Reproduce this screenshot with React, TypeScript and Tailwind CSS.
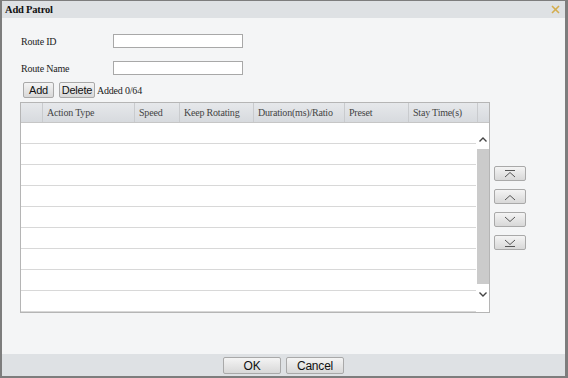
import React from "react";

const cols = [
  { w: "w-[22px]", label: "" },
  { w: "w-[92px]", label: "Action Type" },
  { w: "w-[45px]", label: "Speed" },
  { w: "w-[74px]", label: "Keep Rotating" },
  { w: "w-[91px]", label: "Duration(ms)/Ratio" },
  { w: "w-[64px]", label: "Preset" },
  { w: "w-[69px]", label: "Stay Time(s)" },
];

function Btn({ children, className = "" }: { children: React.ReactNode; className?: string }) {
  return (
    <div
      className={
        "flex items-center justify-center border border-[#a9a9a9] rounded-[2px] bg-gradient-to-b from-[#f4f4f4] to-[#d8d8d8] text-[11px] text-[#111] font-['Liberation_Sans',Arial,sans-serif] " +
        className
      }
    >
      {children}
    </div>
  );
}

function MoveIcon({ kind }: { kind: "top" | "up" | "down" | "bottom" }) {
  return (
    <svg width="12" height="8" viewBox="0 0 12 8" fill="none" stroke="#555" strokeWidth="1">
      {kind === "top" && <line x1="1" y1="0.5" x2="11" y2="0.5" />}
      {(kind === "top" || kind === "up") && <polyline points="1,7 6,2.5 11,7" />}
      {(kind === "down" || kind === "bottom") && <polyline points="1,1 6,5.5 11,1" />}
      {kind === "bottom" && <line x1="1" y1="7.5" x2="11" y2="7.5" />}
    </svg>
  );
}

export default function App() {
  return (
    <div className="w-[568px] h-[378px] bg-[#f4f5f6] border-[#7d7d7d] border-l-2 border-t border-r-[3px] border-b-2 flex flex-col font-['Liberation_Serif',serif] text-[10px] tracking-[-0.2px] text-[#222]">
      {/* title bar */}
      <div className="h-[17px] bg-[#dee1e4] flex items-center justify-between pl-[3px] pr-[5px]">
        <span className="font-bold text-[10.5px] tracking-[-0.2px] text-[#111]">Add Patrol</span>
        <svg width="9" height="9" viewBox="0 0 9 9" stroke="#d4ad4e" strokeWidth="1.6">
          <line x1="1" y1="1" x2="8" y2="8" />
          <line x1="8" y1="1" x2="1" y2="8" />
        </svg>
      </div>

      {/* body */}
      <div className="flex-1 pl-[18px] pt-[16px]">
        <div className="flex items-center h-[14px]">
          <span className="w-[93px] pl-[1px]">Route ID</span>
          <div className="w-[130px] h-[14px] bg-white border border-[#a8a8a8]" />
        </div>
        <div className="flex items-center h-[14px] mt-[13px]">
          <span className="w-[93px] pl-[1px]">Route Name</span>
          <div className="w-[130px] h-[14px] bg-white border border-[#a8a8a8]" />
        </div>
        <div className="flex items-center mt-[7px] h-[16px]">
          <Btn className="w-[31px] h-[16px] ml-[3px]">Add</Btn>
          <Btn className="w-[36px] h-[16px] ml-[5px]">Delete</Btn>
          <span className="ml-[2px]">Added 0/64</span>
        </div>

        <div className="flex items-start mt-[4px]">
          {/* table */}
          <div className="w-[470px] h-[211px] border border-[#b5b5b5] bg-white flex flex-col">
            <div className="h-[20px] flex bg-gradient-to-b from-[#e6e8eb] to-[#d7dade] border-b border-[#c6c6c6] text-[#444]">
              {cols.map((c, i) => (
                <div key={i} className={c.w + " h-full flex items-center pl-[4px] border-r border-[#c9cbce]"}>
                  {c.label}
                </div>
              ))}
              <div className="flex-1" />
            </div>
            <div className="flex flex-1 overflow-hidden">
              <div className="flex-1 flex flex-col">
                {Array.from({ length: 9 }).map((_, i) => (
                  <div key={i} className="h-[21px] shrink-0 border-b border-[#d8d8d8]" />
                ))}
              </div>
              <div className="w-[13px] flex flex-col items-center bg-white">
                <div className="h-[26px] flex items-end justify-center pb-[7px]">
                  <svg width="8" height="5" viewBox="0 0 8 5" fill="none" stroke="#444" strokeWidth="1.4">
                    <polyline points="0.5,4.5 4,1 7.5,4.5" />
                  </svg>
                </div>
                <div className="w-[12px] h-[135px] bg-[#cbcbcb]" />
                <div className="flex-1 flex items-start justify-center pt-[8px]">
                  <svg width="8" height="5" viewBox="0 0 8 5" fill="none" stroke="#444" strokeWidth="1.4">
                    <polyline points="0.5,0.5 4,4 7.5,0.5" />
                  </svg>
                </div>
              </div>
            </div>
          </div>

          {/* move buttons */}
          <div className="flex flex-col gap-[8px] ml-[4px] mt-[64px]">
            <Btn className="w-[32px] h-[15px]"><MoveIcon kind="top" /></Btn>
            <Btn className="w-[32px] h-[15px]"><MoveIcon kind="up" /></Btn>
            <Btn className="w-[32px] h-[15px]"><MoveIcon kind="down" /></Btn>
            <Btn className="w-[32px] h-[15px]"><MoveIcon kind="bottom" /></Btn>
          </div>
        </div>
      </div>

      {/* footer */}
      <div className="h-[22px] bg-[#dee1e4] flex items-start justify-center pt-[3px] gap-[5px]">
        <Btn className="w-[58px] h-[17px] text-[12px]">OK</Btn>
        <Btn className="w-[58px] h-[17px] text-[12px]">Cancel</Btn>
      </div>
    </div>
  );
}
